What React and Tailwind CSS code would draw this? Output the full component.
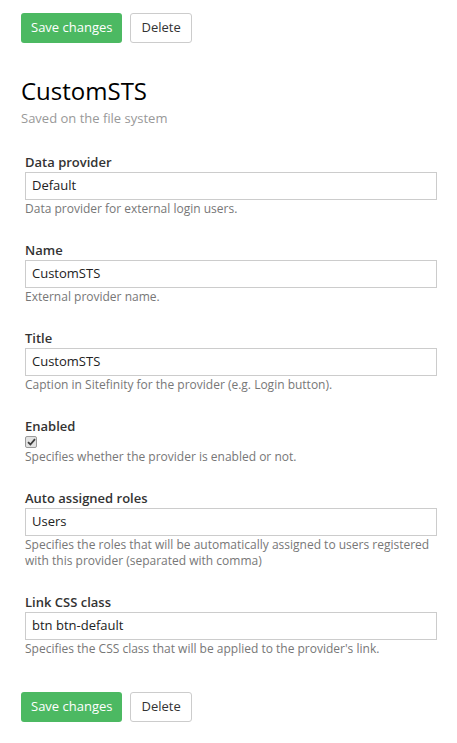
import React from "react";

const font = { fontFamily: '"Open Sans", "Noto Sans", sans-serif' };

const Buttons = () => (
  <div className="flex items-center gap-2">
    <button className="h-[30px] px-[10px] rounded-[3px] bg-[#4cb962] text-white text-[13px]">
      Save changes
    </button>
    <button className="h-[30px] px-[10px] rounded-[3px] border border-[#ccc] bg-white text-[#333] text-[13px]">
      Delete
    </button>
  </div>
);

const Help = ({ children }) => (
  <div className="text-[12px] leading-[16px] text-[#777] pt-[1px]">{children}</div>
);

const Label = ({ children }) => (
  <div className="text-[13px] leading-[18px] font-semibold text-[#333]">{children}</div>
);

const Field = ({ label, value, help }) => (
  <div className="mb-[24px]">
    <Label>{label}</Label>
    <div className="mt-[1px] h-[28px] border border-[#ccc] flex items-center px-[6px] text-[13px] text-[#222]">
      {value}
    </div>
    <Help>{help}</Help>
  </div>
);

export default function App() {
  return (
    <div className="bg-white min-h-screen pl-[21px] pr-[20px] pt-[13px]" style={font}>
      <Buttons />
      <div className="mt-[32px]">
        <h1 className="text-[24px] leading-[32px] text-black">CustomSTS</h1>
        <div className="text-[13px] leading-[18px] text-[#999] mt-[2px]">Saved on the file system</div>
      </div>
      <div className="pl-[4px] mt-[26px]">
        <Field label="Data provider" value="Default" help="Data provider for external login users." />
        <Field label="Name" value="CustomSTS" help="External provider name." />
        <Field
          label="Title"
          value="CustomSTS"
          help="Caption in Sitefinity for the provider (e.g. Login button)."
        />
        <div className="mb-[24px]">
          <Label>Enabled</Label>
          <span className="mt-[1px] flex items-center justify-center w-[12px] h-[12px] rounded-[2px] border border-[#9a9a9a] bg-[#e3e3e3]">
            <svg width="9" height="8" viewBox="0 0 9 8">
              <path d="M1 4.2 L3.4 6.5 L8 1.2" fill="none" stroke="#3d3d3d" strokeWidth="1.8" />
            </svg>
          </span>
          <Help>Specifies whether the provider is enabled or not.</Help>
        </div>
        <Field
          label="Auto assigned roles"
          value="Users"
          help="Specifies the roles that will be automatically assigned to users registered with this provider (separated with comma)"
        />
        <Field
          label="Link CSS class"
          value="btn btn-default"
          help="Specifies the CSS class that will be applied to the provider's link."
        />
      </div>
      <div className="mt-[35px]">
        <Buttons />
      </div>
    </div>
  );
}
